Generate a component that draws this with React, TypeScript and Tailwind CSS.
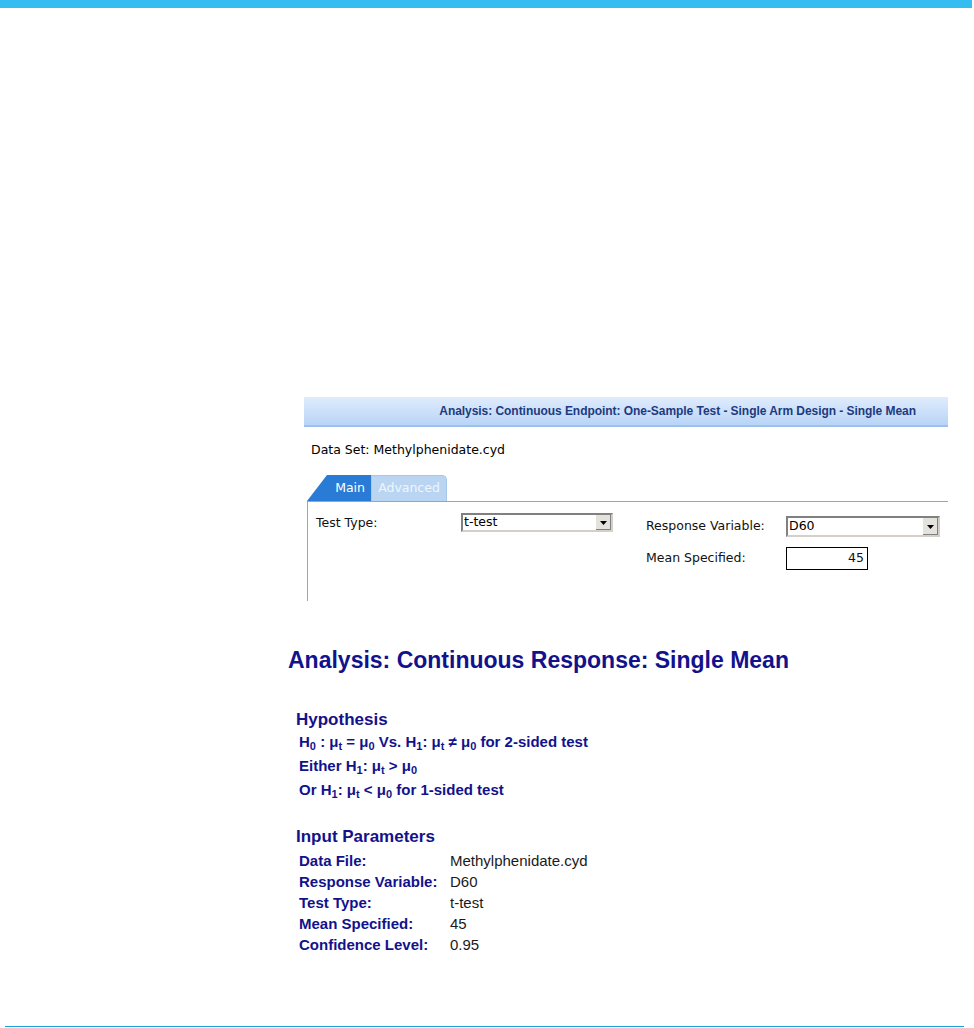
import React from "react";

const ui = { fontFamily: '"DejaVu Sans", Verdana, sans-serif' };
const ar = { fontFamily: '"Liberation Sans", Arial, sans-serif' };

function Select({ value, w, h }: { value: string; w: string; h: string }) {
  return (
    <div
      className={`flex items-stretch border-2 border-t-[#808080] border-l-[#808080] border-b-[#d4d0c8] border-r-[#d4d0c8] bg-white ${w} ${h}`}
    >
      <div className="flex-1 flex items-center pl-[1px] text-[12.5px] text-black leading-none" style={ui}>
        {value}
      </div>
      <div className="w-[16px] bg-[#e4e2dc] border-l border-[#ffffff] flex items-center justify-center shadow-[inset_-1px_-1px_0_#808080]">
        <svg width="7" height="4" viewBox="0 0 7 4">
          <path d="M0 0h7L3.5 4z" fill="#000" />
        </svg>
      </div>
    </div>
  );
}

function Sub({ children }: { children: React.ReactNode }) {
  return <sub className="text-[11px]">{children}</sub>;
}

export default function App() {
  return (
    <div className="w-[974px] h-[1028px] bg-white relative overflow-hidden">
      <div className="h-[8px] w-[972px] bg-[#35bdf2]" />

      <div className="ml-[304px] mt-[389px] w-[644px]">
        <div className="h-[30px] bg-gradient-to-b from-[#e0ecfd] to-[#b8d4f6] border-b-2 border-[#9fc0ee] flex items-center justify-end pr-[32px]">
          <span className="text-[12px] font-bold text-[#1d3a80] tracking-[-0.05px]" style={ar}>
            Analysis: Continuous Endpoint: One-Sample Test - Single Arm Design - Single Mean
          </span>
        </div>

        <div className="mt-[15px] ml-[7px] text-[12.5px] text-black leading-[16px]" style={ui}>
          Data Set: Methylphenidate.cyd
        </div>

        <div className="mt-[17px] ml-[3px]">
          <div className="flex items-end h-[26px]">
            <div
              className="h-[26px] w-[64px] bg-[#2a7bd5] flex items-center justify-end pr-[6px] text-white text-[12.5px]"
              style={{ ...ui, clipPath: "polygon(20px 0, 100% 0, 100% 100%, 0 100%)" }}
            >
              Main
            </div>
            <div
              className="h-[26px] w-[76px] bg-[#b9d5f2] border border-b-0 border-[#a8c6e8] rounded-tr-[5px] flex items-center justify-center text-[#eef5fd] text-[12.5px]"
              style={ui}
            >
              Advanced
            </div>
          </div>
          <div className="h-[100px] border-t border-l border-[#a3a3a3] flex pt-[11px] text-[12.5px] text-[#111]" style={ui}>
            <div className="flex items-start">
              <div className="w-[153px] pl-[8px] pt-[1px]">Test Type:</div>
              <Select value="t-test" w="w-[152px]" h="h-[19px]" />
            </div>
            <div className="ml-[33px] mt-[3px] flex flex-col gap-[10px]">
              <div className="flex items-center">
                <div className="w-[140px]">Response Variable:</div>
                <Select value="D60" w="w-[154px]" h="h-[21px]" />
              </div>
              <div className="flex items-center">
                <div className="w-[140px]">Mean Specified:</div>
                <div className="w-[82px] h-[23px] border border-black flex items-center justify-end pr-[3px]">45</div>
              </div>
            </div>
          </div>
        </div>
      </div>

      <div className="ml-[288px] mt-[46px] text-[#12128c]" style={ar}>
        <div className="text-[23px] font-bold leading-[26px]">Analysis: Continuous Response: Single Mean</div>

        <div className="ml-[8px] mt-[37px] text-[17px] font-bold leading-[20px]">Hypothesis</div>
        <div className="ml-[11px] text-[15px] font-bold leading-[24px]">
          <div>
            H<Sub>0</Sub> : μ<Sub>t</Sub> = μ<Sub>0</Sub> Vs. H<Sub>1</Sub>: μ<Sub>t</Sub> ≠ μ<Sub>0</Sub> for 2-sided test
          </div>
          <div>
            Either H<Sub>1</Sub>: μ<Sub>t</Sub> &gt; μ<Sub>0</Sub>
          </div>
          <div>
            Or H<Sub>1</Sub>: μ<Sub>t</Sub> &lt; μ<Sub>0</Sub> for 1-sided test
          </div>
        </div>

        <div className="ml-[8px] mt-[25px] text-[17px] font-bold leading-[20px]">Input Parameters</div>
        <div className="ml-[11px] mt-[3px] text-[15px] leading-[21px]">
          {[
            ["Data File:", "Methylphenidate.cyd"],
            ["Response Variable:", "D60"],
            ["Test Type:", "t-test"],
            ["Mean Specified:", "45"],
            ["Confidence Level:", "0.95"],
          ].map(([k, v]) => (
            <div key={k} className="flex">
              <div className="w-[151px] font-bold">{k}</div>
              <div className="text-[#1a1a1a]">{v}</div>
            </div>
          ))}
        </div>
      </div>

      <div className="absolute left-[5px] right-[10px] top-[1026px] h-[1px] bg-[#1aa0d8]" />
    </div>
  );
}
